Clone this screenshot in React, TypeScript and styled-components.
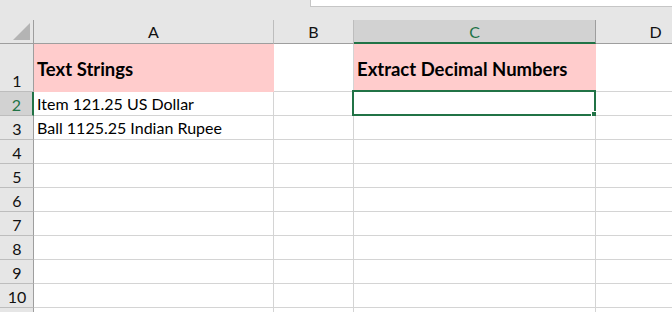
import { Fragment } from "react";
import styled, { createGlobalStyle } from "styled-components";

const GlobalStyle = createGlobalStyle`
  html, body {
    margin: 0;
    padding: 0;
    background: #ffffff;
    overflow: hidden;
  }
  body {
    font-family: Lato, "Liberation Sans", sans-serif;
  }
`;

const GREEN = "#217346";
const GRID = "#d4d4d4";
const HEAD_LINE = "#9e9e9e";

const Window = styled.div`
  width: 672px;
  height: 312px;
  overflow: hidden;
  background: #ffffff;
  display: flex;
  flex-direction: column;
`;

const TopStrip = styled.div`
  height: 20px;
  background: #e6e6e6;
  display: flex;
  align-items: flex-start;
  flex-shrink: 0;
`;

const FormulaBox = styled.div`
  margin-left: 310px;
  flex: 1;
  height: 6px;
  background: #ffffff;
  border-left: 1px solid #c6c6c6;
  border-bottom: 1px solid #c6c6c6;
`;

const Sheet = styled.div`
  display: grid;
  grid-template-columns: 34px 240px 80px 242px 120px;
  grid-template-rows: 24px 48px repeat(11, 24px);
`;

const Corner = styled.div`
  background: #e6e6e6;
  border-right: 1px solid ${HEAD_LINE};
  border-bottom: 1px solid ${HEAD_LINE};
  box-sizing: border-box;
  position: relative;
`;

const CornerTriangle = styled.div`
  position: absolute;
  right: 3px;
  bottom: 3px;
  width: 0;
  height: 0;
  border-left: 17px solid transparent;
  border-bottom: 17px solid #b4b4b4;
`;

const ColHead = styled.div<{ $active?: boolean }>`
  box-sizing: border-box;
  background: ${(p) => (p.$active ? "#d2d2d2" : "#e6e6e6")};
  border-right: 1px solid ${(p) => (p.$active ? HEAD_LINE : "#bdbdbd")};
  border-bottom: ${(p) => (p.$active ? `2px solid ${GREEN}` : `1px solid ${HEAD_LINE}`)};
  color: ${(p) => (p.$active ? GREEN : "#111")};
  display: flex;
  align-items: center;
  justify-content: center;
  padding-top: ${(p) => (p.$active ? "1px" : "0")};
  font-size: 16px;
`;

const RowHead = styled.div<{ $active?: boolean }>`
  box-sizing: border-box;
  background: ${(p) => (p.$active ? "#d2d2d2" : "#e6e6e6")};
  border-right: ${(p) => (p.$active ? `2px solid ${GREEN}` : `1px solid ${HEAD_LINE}`)};
  border-bottom: 1px solid #bdbdbd;
  color: ${(p) => (p.$active ? GREEN : "#111")};
  display: flex;
  align-items: flex-end;
  justify-content: center;
  padding-bottom: 1px;
  padding-left: 1px;
  font-size: 16px;
`;

const Cell = styled.div<{ $fill?: boolean; $bold?: boolean }>`
  box-sizing: border-box;
  background: ${(p) => (p.$fill ? "#ffcccc" : "#ffffff")};
  border-right: 1px solid ${(p) => (p.$fill ? "#ffcccc" : GRID)};
  border-bottom: 1px solid ${(p) => (p.$fill ? "#ffcccc" : GRID)};
  display: flex;
  align-items: ${(p) => (p.$bold ? "center" : "flex-end")};
  padding: ${(p) => (p.$bold ? "2px 3px 0 3px" : "0 3px 2px 3px")};
  font-size: ${(p) => (p.$bold ? "18.5px" : "16px")};
  font-weight: ${(p) => (p.$bold ? 700 : 400)};
  color: #000;
  white-space: nowrap;
  position: relative;
`;

const Selection = styled.div`
  position: absolute;
  left: -2px;
  top: -2px;
  right: -1px;
  bottom: -1px;
  border: 2px solid ${GREEN};
  pointer-events: none;
`;

const FillHandle = styled.div`
  position: absolute;
  right: -5px;
  bottom: -5px;
  width: 6px;
  height: 6px;
  background: ${GREEN};
  border: 1px solid #ffffff;
`;

const columns = ["A", "B", "C", "D"];

const data: Record<number, string[]> = {
  1: ["Text Strings", "", "Extract Decimal Numbers", ""],
  2: ["Item 121.25 US Dollar", "", "", ""],
  3: ["Ball 1125.25 Indian Rupee", "", "", ""],
};

export default function App() {
  const rows = Array.from({ length: 11 }, (_, i) => i + 1);
  return (
    <Window>
      <GlobalStyle />
      <TopStrip>
        <FormulaBox />
      </TopStrip>
      <Sheet>
        <Corner>
          <CornerTriangle />
        </Corner>
        {columns.map((c) => (
          <ColHead key={c} $active={c === "C"}>
            {c}
          </ColHead>
        ))}
        {rows.map((r) => (
          <Fragment key={r}>
            <RowHead $active={r === 2}>{r <= 10 ? r : ""}</RowHead>
            {columns.map((c, ci) => {
              const text = data[r]?.[ci] ?? "";
              const header = r === 1 && (c === "A" || c === "C");
              return (
                <Cell key={`${c}${r}`} $fill={header} $bold={header}>
                  {text}
                  {r === 2 && c === "C" && (
                    <Selection>
                      <FillHandle />
                    </Selection>
                  )}
                </Cell>
              );
            })}
          </Fragment>
        ))}
      </Sheet>
    </Window>
  );
}
